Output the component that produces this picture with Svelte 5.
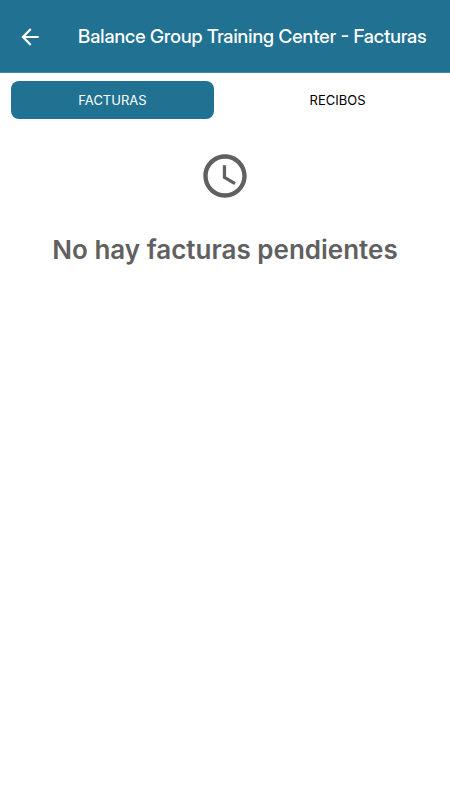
<script>
    let tab = $state("facturas");

    const tabs = [
        { id: "facturas", label: "Facturas" },
        { id: "recibos", label: "Recibos" },
    ];
</script>

<header>
    <button class="back" type="button" aria-label="Volver">
        <svg viewBox="0 0 24 24" width="26" height="26">
            <path d="M20 11H7.83l5.59-5.59L12 4l-8 8 8 8 1.41-1.41L7.83 13H20v-2z" />
        </svg>
    </button>
    <h1>Balance Group Training Center - Facturas</h1>
</header>

<nav>
    {#each tabs as t}
        <button type="button" class="tab" class:active={tab === t.id} onclick={() => (tab = t.id)}>{t.label}</button>
    {/each}
</nav>

<main>
    <svg class="clock" viewBox="0 0 24 24" width="52" height="52">
        <path d="M11.99 2C6.47 2 2 6.48 2 12s4.47 10 9.99 10C17.52 22 22 17.52 22 12S17.52 2 11.99 2zM12 20c-4.42 0-8-3.58-8-8s3.58-8 8-8 8 3.58 8 8-3.58 8-8 8zm.5-13H11v6l5.25 3.15.75-1.23-4.5-2.67z" />
    </svg>
    <h2>No hay {tab} pendientes</h2>
</main>

<style>
    :global(body) {
        background: #fff;
        font-family: Inter, "Liberation Sans", sans-serif;
    }
    button {
        border: 0;
        background: none;
        font-family: inherit;
        cursor: pointer;
    }
    header {
        display: flex;
        align-items: center;
        padding: 23px 17px 21px;
        background: #207192;
        color: #fff;
        border-bottom: 1px solid #4a86a3;
    }
    .back {
        display: flex;
        padding: 0;
    }
    svg {
        fill: currentColor;
    }
    .back svg {
        fill: #fff;
    }
    h1 {
        margin: 0 0 0 35px;
        font-family: "Inter Display", Inter, sans-serif;
        font-size: 19px;
        font-weight: 500;
        line-height: 28px;
        white-space: nowrap;
    }
    nav {
        display: flex;
        padding: 8px 11px 0;
        gap: 22px;
    }
    .tab {
        flex: 1;
        height: 38px;
        padding: 0;
        border-radius: 8px;
        font-size: 13px;
        text-transform: uppercase;
        color: #000;
    }
    .tab.active {
        background: #207192;
        color: #fff;
    }
    main {
        display: flex;
        flex-direction: column;
        align-items: center;
        padding: 31px 16px;
        color: #606060;
    }
    h2 {
        margin: 30px 0 0;
        font-size: 26px;
        font-weight: 600;
        line-height: 36px;
        text-align: center;
    }
</style>
